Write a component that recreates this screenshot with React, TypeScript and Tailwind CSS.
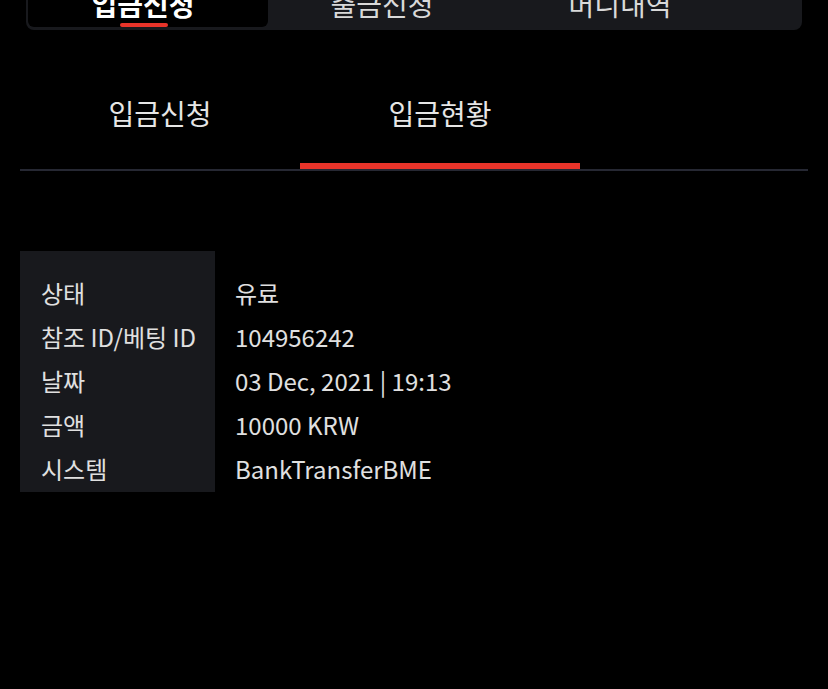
import React from "react";

const rows: [string, string][] = [
  ["상태", "유료"],
  ["참조 ID/베팅 ID", "104956242"],
  ["날짜", "03 Dec, 2021 | 19:13"],
  ["금액", "10000 KRW"],
  ["시스템", "BankTransferBME"],
];

export default function App() {
  return (
    <div
      className="min-h-[689px] w-[828px] bg-black text-white"
      style={{ fontFamily: '"Noto Sans CJK KR", "Noto Sans", sans-serif' }}
    >
      <div className="h-[30px] overflow-hidden px-[26px]">
        <div className="-mt-[22px] flex h-[52px] rounded-b-[8px] bg-[#18191d] p-[2px] pb-[3px]">
          <div className="relative flex w-[240px] items-center justify-center rounded-b-[6px] bg-black pr-[10px] text-[28px] font-bold text-white">
            입금신청
            <div className="absolute bottom-0 left-[92px] h-[4px] w-[48px] rounded-full bg-[#e8342a]" />
          </div>
          <div className="flex w-[238px] items-center justify-center pr-[10px] text-[28px] text-[#d9d9d9]">
            출금신청
          </div>
          <div className="flex w-[238px] items-center justify-center pr-[10px] text-[28px] text-[#d9d9d9]">
            머니내역
          </div>
        </div>
      </div>

      <div className="mx-[20px] mt-[27px] flex border-b-2 border-[#262833]">
        <div className="flex h-[112px] w-[280px] items-center justify-center text-[28px] text-[#e6e6e6]">
          입금신청
        </div>
        <div className="relative flex h-[112px] w-[280px] items-center justify-center text-[28px] text-[#e6e6e6]">
          입금현황
          <div className="absolute bottom-0 left-0 h-[6px] w-full bg-[#e8342a]" />
        </div>
      </div>

      <div className="mx-[20px] mt-[80px] flex">
        <div className="w-[195px] bg-[#18191d] pt-[20px] pb-[1px] pl-[21px] text-[24px] text-[#e0e0e0]">
          {rows.map(([k]) => (
            <div key={k} className="flex h-[44px] items-center whitespace-nowrap">
              {k}
            </div>
          ))}
        </div>
        <div className="pt-[20px] pl-[20px] text-[24px] text-[#e0e0e0]">
          {rows.map(([k, v]) => (
            <div key={k} className="flex h-[44px] items-center whitespace-nowrap">
              {v}
            </div>
          ))}
        </div>
      </div>
    </div>
  );
}
